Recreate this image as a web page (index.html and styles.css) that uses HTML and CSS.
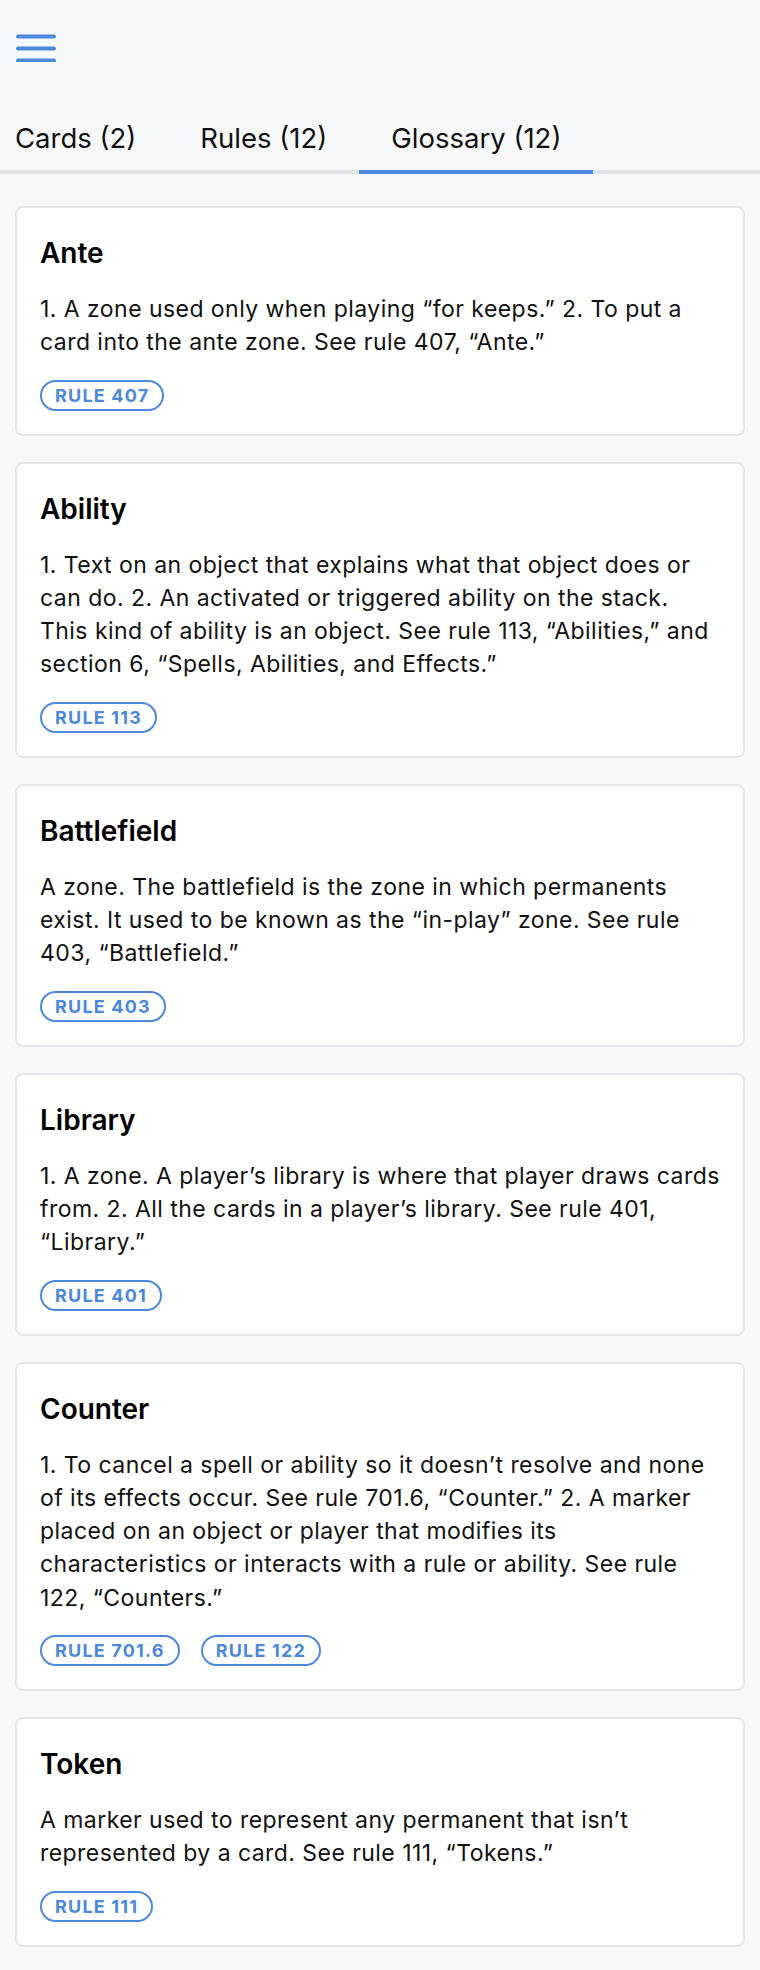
FILE: index.html
```html
<!DOCTYPE html>
<html lang="en">
<head>
<meta charset="utf-8">
<title>Glossary</title>
<link rel="stylesheet" href="styles.css">
</head>
<body>
<header class="topbar">
  <button class="menu-btn" aria-label="Menu">
    <svg width="40" height="28" viewBox="0 0 40 28" fill="none" stroke="#4a89dc" stroke-width="4" stroke-linecap="round">
      <line x1="2" y1="2.5" x2="38" y2="2.5"/>
      <line x1="2" y1="14.5" x2="38" y2="14.5"/>
      <line x1="2" y1="26.5" x2="38" y2="26.5"/>
    </svg>
  </button>
</header>
<nav class="tabs">
  <span class="tab">Cards (2)</span>
  <span class="tab">Rules (12)</span>
  <span class="tab active">Glossary (12)</span>
</nav>
<main class="list">
  <article class="card">
    <h2 class="term">Ante</h2>
    <p class="def">1. A zone used only when playing “for keeps.” 2. To put a card into the ante zone. See rule 407, “Ante.”</p>
    <div class="chips"><span class="chip">RULE 407</span></div>
  </article>
  <article class="card">
    <h2 class="term">Ability</h2>
    <p class="def">1. Text on an object that explains what that object does or can do. 2. An activated or triggered ability on the stack. This kind of ability is an object. See rule 113, “Abilities,” and section 6, “Spells, Abilities, and Effects.”</p>
    <div class="chips"><span class="chip">RULE 113</span></div>
  </article>
  <article class="card">
    <h2 class="term">Battlefield</h2>
    <p class="def">A zone. The battlefield is the zone in which permanents exist. It used to be known as the “in-play” zone. See rule 403, “Battlefield.”</p>
    <div class="chips"><span class="chip">RULE 403</span></div>
  </article>
  <article class="card">
    <h2 class="term">Library</h2>
    <p class="def">1. A zone. A player’s library is where that player draws cards from. 2. All the cards in a player’s library. See rule 401, “Library.”</p>
    <div class="chips"><span class="chip">RULE 401</span></div>
  </article>
  <article class="card">
    <h2 class="term">Counter</h2>
    <p class="def">1. To cancel a spell or ability so it doesn’t resolve and none of its effects occur. See rule 701.6, “Counter.” 2. A marker placed on an object or player that modifies its characteristics or interacts with a rule or ability. See rule 122, “Counters.”</p>
    <div class="chips"><span class="chip">RULE 701.6</span><span class="chip">RULE 122</span></div>
  </article>
  <article class="card">
    <h2 class="term">Token</h2>
    <p class="def">A marker used to represent any permanent that isn’t represented by a card. See rule 111, “Tokens.”</p>
    <div class="chips"><span class="chip">RULE 111</span></div>
  </article>
</main>
</body>
</html>
```
FILE: styles.css
```css
* { box-sizing: border-box; }
html, body { margin: 0; padding: 0; }
body {
  background: #f7f8fa;
  font-family: Inter, "Noto Sans", sans-serif;
  color: #111;
}
.topbar {
  padding: 34px 16px 0;
  height: 62px;
}
.menu-btn {
  display: block;
  padding: 0;
  border: 0;
  background: none;
  width: 40px;
  height: 28px;
}
.menu-btn svg { display: block; }
.tabs {
  display: flex;
  margin-top: 60px;
  border-bottom: 4px solid #dfe1e5;
}
.tab {
  font-size: 27.5px;
  line-height: 32px;
  padding: 0 32px 16px;
  margin-bottom: -4px;
  border-bottom: 4px solid transparent;
  color: #111;
  white-space: nowrap;
}
.tab:first-child { padding-left: 15px; }
.tab.active { border-bottom-color: #4a89dc; }
.list {
  display: flex;
  flex-direction: column;
  gap: 26px;
  padding: 32px 15px 26px;
}
.card {
  background: #fff;
  border: 2px solid #e3e5e8;
  border-radius: 8px;
  padding: 28px 23px 23px;
}
.term {
  margin: 0 0 23px;
  font-size: 28px;
  line-height: 34px;
  font-weight: 600;
  color: #000;
}
.def {
  margin: 0 0 20px;
  font-size: 23px;
  letter-spacing: 0.45px;
  line-height: 33.3px;
  color: #111;
}
.chips {
  display: flex;
  gap: 21px;
}
.chip {
  display: inline-flex;
  align-items: center;
  height: 31px;
  padding: 0 13px;
  border: 2px solid #4a89dc;
  border-radius: 16px;
  color: #4a89dc;
  font-size: 18px;
  font-weight: 700;
  letter-spacing: 1.2px;
}
```
